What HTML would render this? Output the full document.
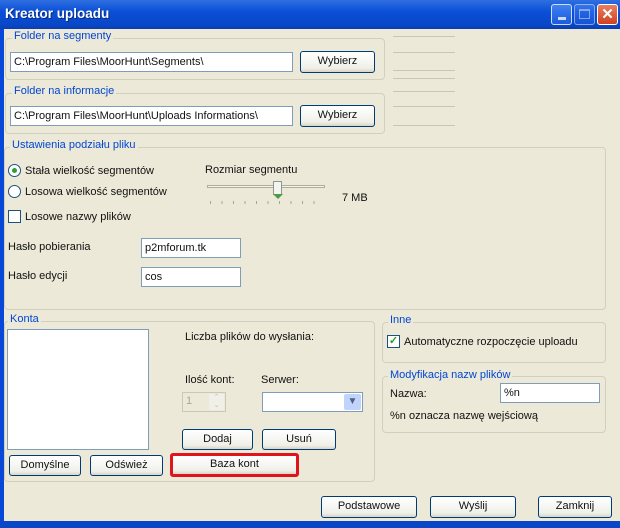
<!DOCTYPE html>
<html><head><meta charset="utf-8"><style>
*{box-sizing:border-box;margin:0;padding:0}
body{width:620px;height:528px;overflow:hidden;background:#ece9d8;font-family:"Liberation Sans",sans-serif;font-size:11px;color:#111;position:relative}
.a{position:absolute}
.title{left:0;top:0;width:620px;height:29px;background:linear-gradient(#2f6fe0,#0a4fd8 40%,#0847c8 85%,#0a3db0);}
.title span{position:absolute;left:5px;top:6px;color:#fff;font-weight:bold;font-size:13.5px;text-shadow:1px 1px #0a2a80}
.lb{left:0;top:29px;width:4px;height:499px;background:#0848d8}
.bb{left:0;top:521px;width:620px;height:7px;background:#0a46c8}
.tb{width:21px;height:21px;top:4px;border:1px solid #fff;border-radius:3px;background:linear-gradient(#4a8af8,#2260e0)}
.grp{border:1px solid #d0d0bf;border-radius:4px}
.gl{color:#0046d5;background:#ece9d8;padding:0 2px;white-space:nowrap}
.txt{background:#fff;border:1px solid #7f9db9;padding:3px 3px;white-space:nowrap;overflow:hidden;line-height:13px}
.btn{border:1px solid #003c74;border-radius:3px;background:linear-gradient(#fff,#f0f0ea 80%,#d8d4c6);text-align:center;line-height:19px}
.ln{height:1px;background:#c9c6b4;left:393px;width:62px}
</style></head><body>
<div class="a title"><span>Kreator uploadu</span></div>
<div class="a tb" style="left:551px;opacity:.8"><div class="a" style="left:6px;top:12px;width:8px;height:3px;background:#fff"></div></div>
<div class="a tb" style="left:574px;opacity:.5"><div class="a" style="left:4px;top:4px;width:11px;height:10px;border:1px solid #fff;border-top-width:2px"></div></div>
<div class="a tb" style="left:597px;background:linear-gradient(#e88060,#d04020);color:#fff;text-align:center;font-weight:bold;font-size:15px;line-height:19px">✕</div>
<div class="a lb"></div><div class="a bb"></div>

<div class="a ln" style="top:36px"></div><div class="a ln" style="top:52px"></div><div class="a ln" style="top:70px"></div><div class="a ln" style="top:78px"></div>
<div class="a ln" style="top:91px"></div><div class="a ln" style="top:106px"></div><div class="a ln" style="top:125px"></div>

<div class="a grp" style="left:5px;top:38px;width:380px;height:42px"></div>
<div class="a gl" style="left:12px;top:30px">Folder na segmenty</div>
<div class="a txt" style="left:10px;top:52px;width:283px;height:20px">C:\Program Files\MoorHunt\Segments\</div>
<div class="a btn" style="left:300px;top:51px;width:75px;height:22px">Wybierz</div>

<div class="a grp" style="left:5px;top:93px;width:380px;height:41px"></div>
<div class="a gl" style="left:12px;top:85px">Folder na informacje</div>
<div class="a txt" style="left:10px;top:106px;width:283px;height:20px">C:\Program Files\MoorHunt\Uploads Informations\</div>
<div class="a btn" style="left:300px;top:105px;width:75px;height:22px">Wybierz</div>

<div class="a grp" style="left:4px;top:147px;width:602px;height:163px"></div>
<div class="a gl" style="left:10px;top:139px">Ustawienia podziału pliku</div>
<div class="a" style="left:8px;top:164px;width:13px;height:13px;border:1px solid #1c5180;border-radius:50%;background:#fff"><div class="a" style="left:3px;top:3px;width:5px;height:5px;border-radius:50%;background:#2fa02f"></div></div>
<div class="a" style="left:25px;top:165px">Stała wielkość segmentów</div>
<div class="a" style="left:8px;top:185px;width:13px;height:13px;border:1px solid #1c5180;border-radius:50%;background:#fff"></div>
<div class="a" style="left:25px;top:186px">Losowa wielkość segmentów</div>
<div class="a" style="left:8px;top:210px;width:13px;height:13px;border:1px solid #1c5180;background:#fff"></div>
<div class="a" style="left:25px;top:211px">Losowe nazwy plików</div>
<div class="a" style="left:205px;top:164px">Rozmiar segmentu</div>
<div class="a" style="left:207px;top:185px;width:118px;height:3px;border:1px solid #b0ad9c;background:#f4f3ee"></div>
<div class="a" style="left:273px;top:181px;width:9px;height:14px;background:#f4f4f0;border:1px solid #8a9a8a;border-bottom:none"></div>
<div class="a" style="left:273px;top:194px;width:0;height:0;border-left:5px solid transparent;border-right:5px solid transparent;border-top:5px solid #4a9a4a"></div>
<div class="a" style="left:210px;top:201px;width:115px;height:3px;background:repeating-linear-gradient(90deg,#a8a590 0 1px,transparent 1px 11.5px)"></div>
<div class="a" style="left:342px;top:192px">7 MB</div>
<div class="a" style="left:8px;top:241px">Hasło pobierania</div>
<div class="a txt" style="left:141px;top:238px;width:100px;height:20px">p2mforum.tk</div>
<div class="a" style="left:8px;top:270px">Hasło edycji</div>
<div class="a txt" style="left:141px;top:267px;width:100px;height:20px">cos</div>

<div class="a grp" style="left:4px;top:321px;width:371px;height:161px"></div>
<div class="a gl" style="left:8px;top:313px">Konta</div>
<div class="a" style="left:7px;top:329px;width:142px;height:121px;background:#fff;border:1px solid #7f9db9"></div>
<div class="a" style="left:185px;top:331px">Liczba plików do wysłania:</div>
<div class="a" style="left:185px;top:374px">Ilość kont:</div>
<div class="a" style="left:261px;top:374px">Serwer:</div>
<div class="a" style="left:182px;top:392px;width:44px;height:20px;border:1px solid #c9c7ba;color:#aca899;padding:2px 3px">1<div class="a" style="left:26px;top:1px;width:15px;height:16px;background:#f0efe8;font-size:7px;color:#bbb;text-align:center;line-height:8px">⌃<br>⌄</div></div>
<div class="a" style="left:262px;top:392px;width:101px;height:20px;border:1px solid #7f9db9;background:#fff"><div class="a" style="left:81px;top:1px;width:17px;height:16px;background:#c1d3fb;border-radius:2px;color:#4d6185;text-align:center;font-size:10px;line-height:16px">▼</div></div>
<div class="a btn" style="left:182px;top:429px;width:71px;height:21px">Dodaj</div>
<div class="a btn" style="left:262px;top:429px;width:74px;height:21px">Usuń</div>
<div class="a btn" style="left:9px;top:455px;width:72px;height:21px">Domyślne</div>
<div class="a btn" style="left:90px;top:455px;width:73px;height:21px">Odśwież</div>
<div class="a btn" style="left:170px;top:453px;width:129px;height:24px;border:3px solid #e0141c;line-height:17px">Baza kont</div>

<div class="a grp" style="left:382px;top:322px;width:224px;height:41px"></div>
<div class="a gl" style="left:388px;top:314px">Inne</div>
<div class="a" style="left:387px;top:335px;width:13px;height:13px;border:1px solid #1c5180;background:#fff;color:#21a121;font-size:11px;line-height:11px;text-align:center;font-weight:bold">✓</div>
<div class="a" style="left:404px;top:336px">Automatyczne rozpoczęcie uploadu</div>

<div class="a grp" style="left:382px;top:376px;width:224px;height:57px"></div>
<div class="a gl" style="left:388px;top:369px">Modyfikacja nazw plików</div>
<div class="a" style="left:390px;top:388px">Nazwa:</div>
<div class="a txt" style="left:500px;top:383px;width:100px;height:20px">%n</div>
<div class="a" style="left:390px;top:410px">%n oznacza nazwę wejściową</div>

<div class="a btn" style="left:321px;top:496px;width:96px;height:22px">Podstawowe</div>
<div class="a btn" style="left:430px;top:496px;width:86px;height:22px">Wyślij</div>
<div class="a btn" style="left:538px;top:496px;width:74px;height:22px">Zamknij</div>
</body></html>
